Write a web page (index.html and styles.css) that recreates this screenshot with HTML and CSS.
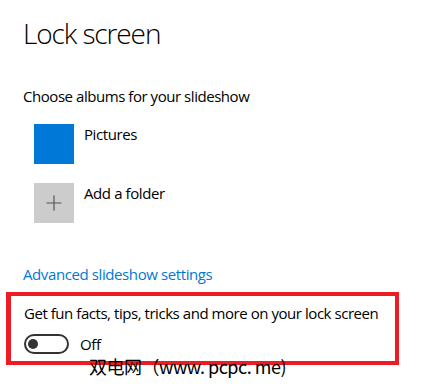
FILE: index.html
```html
<!DOCTYPE html>
<html lang="en">
<head>
    <meta charset="UTF-8">
    <meta name="viewport" content="width=device-width, initial-scale=1.0">
    <title>Lock screen</title>
    <link rel="stylesheet" href="styles.css">
</head>
<body>
    <div class="page">
        <h1 class="title">Lock screen</h1>

        <p class="label">Choose albums for your slideshow</p>

        <ul class="albums">
            <li class="album">
                <span class="album-thumb album-thumb--blue"></span>
                <span class="album-name">Pictures</span>
            </li>
            <li class="album">
                <span class="album-thumb album-thumb--add">
                    <svg width="16" height="16" viewBox="0 0 16 16">
                        <path d="M8 0.5V15.5M0.5 8H15.5" stroke="#555" stroke-width="1.2" fill="none"/>
                    </svg>
                </span>
                <span class="album-name">Add a folder</span>
            </li>
        </ul>

        <a class="link" href="#">Advanced slideshow settings</a>

        <div class="highlight">
            <p class="label">Get fun facts, tips, tricks and more on your lock screen</p>
            <div class="toggle-row">
                <span class="toggle"><span class="toggle-knob"></span></span>
                <span class="toggle-text">Off</span>
            </div>
        </div>
    </div>

    <div class="watermark">双电网（www. pcpc. me)</div>
</body>
</html>
```

FILE: styles.css
```css
:root {
    --accent: #0078d7;
    --text: #000000;
    --red: #ed1c24;
}

* {
    margin: 0;
    padding: 0;
    box-sizing: border-box;
}

body {
    font-family: 'Open Sans', 'Noto Sans', sans-serif;
    background: #ffffff;
    color: var(--text);
    width: 422px;
    height: 390px;
    overflow: hidden;
    position: relative;
}

.page {
    padding: 13px 0 0 23px;
}

.title {
    font-size: 28px;
    font-weight: 300;
    line-height: 40px;
    letter-spacing: -1.1px;
}

.label {
    font-size: 15px;
    line-height: 20px;
    margin-top: 33px;
    letter-spacing: -0.45px;
}

.albums {
    list-style: none;
    margin: 18px 0 0 11px;
    display: flex;
    flex-direction: column;
    gap: 19px;
}

.album {
    display: flex;
    align-items: flex-start;
    gap: 10px;
}

.album-thumb {
    width: 40px;
    height: 40px;
    display: flex;
    align-items: center;
    justify-content: center;
}

.album-thumb--blue {
    background: var(--accent);
}

.album-thumb--add {
    background: #cccccc;
}

.album-name {
    font-size: 15px;
    line-height: 20px;
    letter-spacing: -0.4px;
}

.link {
    display: block;
    margin-top: 41px;
    font-size: 15px;
    line-height: 20px;
    color: var(--accent);
    text-decoration: none;
    letter-spacing: -0.4px;
}

.highlight {
    margin: 8px 0 0 -17px;
    width: 393px;
    border: 4px solid var(--red);
    border-left-width: 5px;
    padding: 7px 0 7px 13px;
}

.highlight .label {
    margin-top: 0;
}

.toggle-row {
    margin-top: 11px;
    display: flex;
    align-items: center;
    gap: 11px;
}

.toggle {
    width: 45px;
    height: 20px;
    border: 2px solid #333333;
    border-radius: 10px;
    display: flex;
    align-items: center;
    padding-left: 2px;
}

.toggle-knob {
    width: 10px;
    height: 10px;
    border-radius: 50%;
    background: #333333;
}

.toggle-text {
    font-size: 15px;
    line-height: 20px;
    letter-spacing: -0.3px;
}

.watermark {
    position: absolute;
    left: 89px;
    top: 352px;
    font-family: 'Noto Sans CJK SC', 'Liberation Sans', sans-serif;
    font-size: 18px;
    line-height: 28px;
    letter-spacing: -0.5px;
    color: #000000;
    white-space: nowrap;
}
```
